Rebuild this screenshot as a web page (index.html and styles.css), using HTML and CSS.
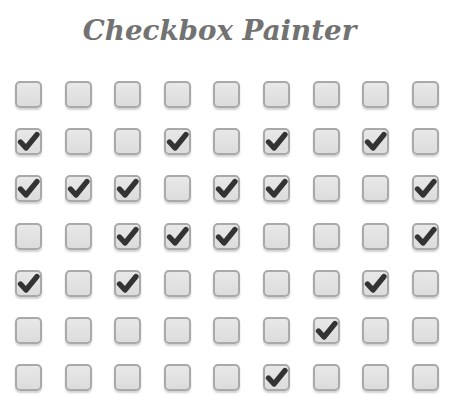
FILE: index.html
```html
<!DOCTYPE html>
<html>
<head>
<meta charset="utf-8">
<link rel="stylesheet" href="styles.css">
</head>
<body>
<div class="page">
  <h1 class="title">Checkbox Painter</h1>
  <div class="grid" id="grid"></div>
</div>
<script src="app.js"></script>
</body>
</html>
```
FILE: styles.css
```css
html, body {
  margin: 0;
  padding: 0;
  background: #ffffff;
}
.page {
  width: 450px;
  height: 401px;
  overflow: hidden;
}
.title {
  margin: 0;
  padding: 12px 0 0 0;
  width: 439px;
  text-align: center;
  font-family: "DejaVu Serif", serif;
  font-style: italic;
  font-weight: bold;
  font-size: 27.7px;
  line-height: 38px;
  color: #727272;
}
.grid {
  display: grid;
  grid-template-columns: repeat(9, 27px);
  column-gap: 22.6px;
  row-gap: 20.2px;
  padding: 31px 0 0 15px;
}
.box {
  box-sizing: border-box;
  width: 27px;
  height: 27px;
  border: 2px solid #a9a9a9;
  border-radius: 5px;
  background: linear-gradient(#e8e8e8, #dcdcdc);
  box-shadow: 0 2px 2px rgba(0, 0, 0, 0.18);
  display: flex;
  align-items: center;
  justify-content: center;
}
.box svg {
  display: block;
}
```
FILE: app.js
```js
var rows = [
  [],
  [1,4,6,8],
  [1,2,3,5,6,9],
  [3,4,5,9],
  [1,3,8],
  [7],
  [6]
];
var grid = document.getElementById('grid');
var check = '<svg width="23" height="23" viewBox="0 0 23 23"><path d="M3.5 12 L9 18 L20 4.5" fill="none" stroke="#333" stroke-width="5.3" stroke-linecap="round" stroke-linejoin="round"/></svg>';
rows.forEach(function (r) {
  for (var c = 1; c <= 9; c++) {
    var d = document.createElement('div');
    d.className = 'box';
    if (r.indexOf(c) >= 0) d.innerHTML = check;
    grid.appendChild(d);
  }
});
```
